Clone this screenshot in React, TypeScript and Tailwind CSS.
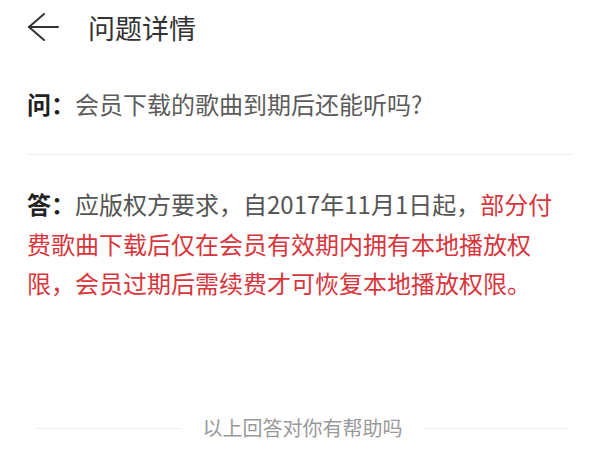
import React from 'react'

const font = { fontFamily: '"Noto Sans CJK SC", "Noto Sans", sans-serif' }

const BackArrow = () => (
    <svg width="32" height="28" viewBox="0 0 32 28" fill="none" stroke="#333" strokeWidth="2" strokeLinecap="round" strokeLinejoin="round">
        <path d="M17 1 L2 14 L17 27" />
        <path d="M2 14 H31" />
    </svg>
)

const App = () => {
    return (
        <div className="w-[600px] h-[450px] bg-white flex flex-col overflow-hidden" style={font}>
            {/* header */}
            <div className="h-[54px] flex items-center pl-[27px]">
                <BackArrow />
                <div className="ml-[29px] text-[27px] leading-none text-[#333]">问题详情</div>
            </div>

            {/* question */}
            <div className="mx-[27px] mt-[32px] pb-[32px] border-b border-[#efefef]">
                <div className="text-[24px] leading-[36px] text-[#5c5c5c]">
                    <span className="font-bold text-[#222]">问：</span>会员下载的歌曲到期后还能听吗?
                </div>
            </div>

            {/* answer */}
            <div className="mx-[27px] pt-[29px]">
                <div className="text-[24px] leading-[39.5px] text-[#555]">
                    <span className="font-bold text-[#222]">答：</span>应版权方要求，自2017年11月1日起，
                    <span className="text-[#d8363c]">
                        部分付<br />费歌曲下载后仅在会员有效期内拥有本地播放权<br />限，会员过期后需续费才可恢复本地播放权限。
                    </span>
                </div>
            </div>

            {/* footer */}
            <div className="mt-auto mb-[8px] flex items-center pl-[36px] pr-[31px]">
                <div className="flex-1 h-px bg-[#eeeeee]" />
                <div className="mx-[21px] text-[20px] leading-[28px] text-[#999]">以上回答对你有帮助吗</div>
                <div className="flex-1 h-px bg-[#eeeeee]" />
            </div>
        </div>
    )
}

export default App
